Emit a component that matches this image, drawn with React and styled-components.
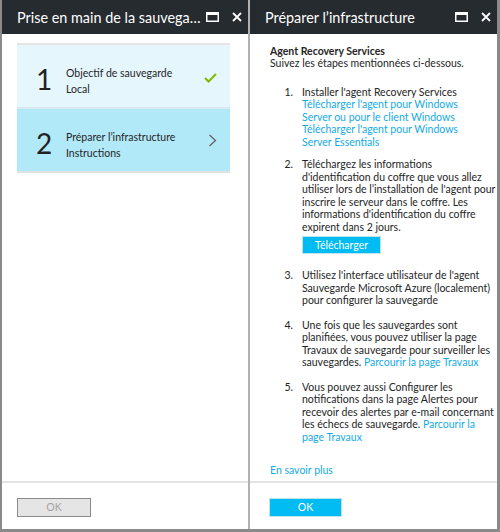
import React from 'react';
import styled, { createGlobalStyle } from 'styled-components';

const GlobalStyle = createGlobalStyle`
  html, body {
    margin: 0;
    padding: 0;
    background: #fff;
  }
  body {
    font-family: Lato, "Open Sans", sans-serif;
    color: #252525;
  }
`;

const Frame = styled.div`
  width: 500px;
  height: 532px;
  box-sizing: border-box;
  display: flex;
  background: #fff;
  border-left: 2px solid #8a8a8a;
  border-right: 3px solid #8a8a8a;
  border-bottom: 3px solid #8a8a8a;
`;

const Blade = styled.section`
  display: flex;
  flex-direction: column;
  box-sizing: border-box;
  flex: ${(p) => (p.$width ? `0 0 ${p.$width}px` : '1 1 auto')};
  border-right: ${(p) => (p.$divider ? '2px solid #b1b1b1' : 'none')};
  min-width: 0;
`;

const Header = styled.header`
  height: 34px;
  flex: 0 0 34px;
  background: #262b30;
  display: flex;
  align-items: center;
  padding: 0 6px 0 15px;
  box-sizing: border-box;
`;

const Title = styled.h1`
  margin: 0;
  flex: 1;
  min-width: 0;
  font-size: 14.4px;
  font-weight: 400;
  color: #fff;
  white-space: nowrap;
  overflow: hidden;
  text-overflow: ellipsis;
  padding-right: 4px;
`;

const HeaderIcons = styled.div`
  display: flex;
  align-items: center;
  gap: 13px;
`;

const Body = styled.div`
  flex: 1 1 auto;
  min-height: 0;
  overflow: hidden;
  padding: ${(p) => p.$pad};
  font-size: 10.5px;
  line-height: 12.4px;
  white-space: nowrap;
`;

const StepList = styled.ul`
  list-style: none;
  margin: 0;
  padding: 0;
  border-top: 2px solid #e4e4e4;
`;

const Step = styled.li`
  height: 62px;
  display: flex;
  align-items: center;
  background: ${(p) => (p.$active ? '#b2e9f8' : '#e5f6fd')};
  border-bottom: 2px solid ${(p) => (p.$active ? '#e2e2e2' : '#d8e9ef')};
  padding: 0 13px 0 19px;
`;

const StepNumber = styled.span`
  width: 30px;
  margin-top: 5px;
  font-size: 28px;
  line-height: 28px;
  color: #222;
`;

const StepText = styled.div`
  flex: 1;
  margin-top: 10px;
  font-size: 10.5px;
  line-height: 16px;
  color: #252525;
`;

const StepIcon = styled.span`
  display: flex;
  margin-top: ${(p) => p.$mt}px;
`;

const Heading = styled.div`
  font-weight: 700;
`;

const Steps = styled.ol`
  list-style: none;
  margin: 16px 0 0;
  padding: 0;
`;

const Item = styled.li`
  display: grid;
  grid-template-columns: 32px 1fr;
  line-height: 12.5px;
  margin-top: ${(p) => p.$gap}px;
`;

const ItemNum = styled.span`
  text-align: right;
  padding-right: 9px;
`;

const Link = styled.a`
  color: #14aae6;
  text-decoration: none;
`;

const PrimaryButton = styled.button`
  display: block;
  width: ${(p) => p.$w}px;
  height: ${(p) => p.$h}px;
  margin-top: ${(p) => p.$mt || 0}px;
  padding: 0;
  border: 1px solid ${(p) => (p.$disabled ? '#8a8a8a' : '#bfe3ef')};
  background: ${(p) => (p.$disabled ? '#e5e5e5' : '#00bcf2')};
  color: ${(p) => (p.$disabled ? '#a3a3a3' : '#fff')};
  font-family: inherit;
  font-size: 10.5px;
  line-height: 1;
  box-sizing: border-box;
`;

const MoreLink = styled(Link)`
  display: block;
  margin-top: 21px;
`;

const Footer = styled.footer`
  flex: 0 0 48px;
  box-sizing: border-box;
  border-top: 2px solid #e3e3e3;
  padding: 15px 0 0 ${(p) => p.$left}px;
`;

const MaxIcon = () => (
  <svg width="13" height="10" viewBox="0 0 13 10">
    <rect x="0.75" y="0.75" width="11.5" height="8.5" fill="none" stroke="#fff" strokeWidth="1.5" />
    <rect x="0" y="0" width="13" height="3" fill="#fff" />
  </svg>
);

const CloseIcon = () => (
  <svg width="10" height="10" viewBox="0 0 10 10">
    <path d="M1 1 L9 9 M9 1 L1 9" stroke="#fff" strokeWidth="1.8" />
  </svg>
);

const Check = () => (
  <svg width="13" height="10" viewBox="0 0 13 10">
    <polyline points="1,5 4.5,8.5 12,1" fill="none" stroke="#7fba00" strokeWidth="2" />
  </svg>
);

const Chevron = () => (
  <svg width="9" height="13" viewBox="0 0 9 13">
    <polyline points="1.5,1 7.5,6.5 1.5,12" fill="none" stroke="#5e5e5e" strokeWidth="1.2" />
  </svg>
);

const BladeHeader = ({ title }) => (
  <Header>
    <Title>{title}</Title>
    <HeaderIcons>
      <MaxIcon />
      <CloseIcon />
    </HeaderIcons>
  </Header>
);

export default function App() {
  return (
    <>
      <GlobalStyle />
      <Frame>
        <Blade $width={248} $divider>
          <BladeHeader title="Prise en main de la sauvegarde" />
          <Body $pad="9px 18px 0 15px">
            <StepList>
              <Step>
                <StepNumber>1</StepNumber>
                <StepText>
                  Objectif de sauvegarde
                  <br />
                  Local
                </StepText>
                <StepIcon $mt={3}>
                  <Check />
                </StepIcon>
              </Step>
              <Step $active>
                <StepNumber>2</StepNumber>
                <StepText>
                  Préparer l’infrastructure
                  <br />
                  Instructions
                </StepText>
                <StepIcon $mt={1}>
                  <Chevron />
                </StepIcon>
              </Step>
            </StepList>
          </Body>
          <Footer $left={15}>
            <PrimaryButton $w={74} $h={19} $disabled>OK</PrimaryButton>
          </Footer>
        </Blade>

        <Blade>
          <BladeHeader title="Préparer l’infrastructure" />
          <Body $pad="11px 0 0 20px">
            <Heading>Agent Recovery Services</Heading>
            <div>Suivez les étapes mentionnées ci-dessous.</div>
            <Steps>
              <Item $gap={0}>
                <ItemNum>1.</ItemNum>
                <div>
                  Installer l'agent Recovery Services
                  <br />
                  <Link href="#">
                    Télécharger l'agent pour Windows
                    <br />
                    Server ou pour le client Windows
                  </Link>
                  <br />
                  <Link href="#">
                    Télécharger l'agent pour Windows
                    <br />
                    Server Essentials
                  </Link>
                </div>
              </Item>
              <Item $gap={10}>
                <ItemNum>2.</ItemNum>
                <div>
                  Téléchargez les informations
                  <br />
                  d'identification du coffre que vous allez
                  <br />
                  utiliser lors de l’installation de l'agent pour
                  <br />
                  inscrire le serveur dans le coffre. Les
                  <br />
                  informations d'identification du coffre
                  <br />
                  expirent dans 2 jours.
                  <PrimaryButton $w={79} $h={18} $mt={3}>Télécharger</PrimaryButton>
                </div>
              </Item>
              <Item $gap={15}>
                <ItemNum>3.</ItemNum>
                <div>
                  Utilisez l'interface utilisateur de l'agent
                  <br />
                  Sauvegarde Microsoft Azure (localement)
                  <br />
                  pour configurer la sauvegarde
                </div>
              </Item>
              <Item $gap={12}>
                <ItemNum>4.</ItemNum>
                <div>
                  Une fois que les sauvegardes sont
                  <br />
                  planifiées, vous pouvez utiliser la page
                  <br />
                  Travaux de sauvegarde pour surveiller les
                  <br />
                  sauvegardes. <Link href="#">Parcourir la page Travaux</Link>
                </div>
              </Item>
              <Item $gap={12}>
                <ItemNum>5.</ItemNum>
                <div>
                  Vous pouvez aussi Configurer les
                  <br />
                  notifications dans la page Alertes pour
                  <br />
                  recevoir des alertes par e-mail concernant
                  <br />
                  les échecs de sauvegarde. <Link href="#">Parcourir la</Link>
                  <br />
                  <Link href="#">page Travaux</Link>
                </div>
              </Item>
            </Steps>
            <MoreLink href="#">En savoir plus</MoreLink>
          </Body>
          <Footer $left={19}>
            <PrimaryButton $w={73} $h={19}>OK</PrimaryButton>
          </Footer>
        </Blade>
      </Frame>
    </>
  );
}
